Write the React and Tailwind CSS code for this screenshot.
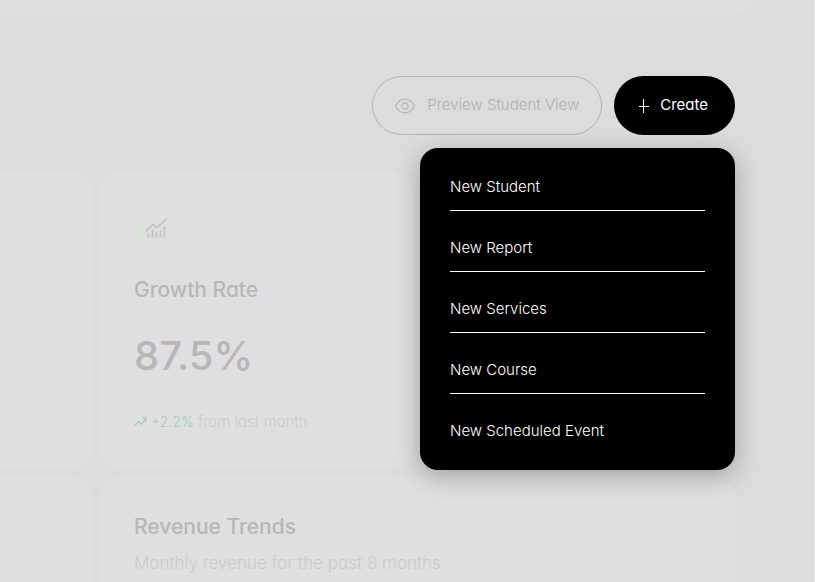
import React from 'react';

const menuItems = ['New Student', 'New Report', 'New Services', 'New Course', 'New Scheduled Event'];

const EyeIcon = () => (
  <svg width="20" height="16" viewBox="0 0 20 16" fill="none" stroke="currentColor" strokeWidth="1.1" aria-hidden="true">
    <path d="M1 7.2C3.4 3.2 6.3 1 10 1s6.600 2.200 9 6.200c.3.500.3 1.100 0 1.600-2.400 4-5.300 6.200-9 6.200s-6.600-2.200-9-6.200c-.3-.5-.3-1.100 0-1.600Z" />
    <circle cx="10" cy="8" r="3.1" />
  </svg>
);

const PlusIcon = () => (
  <svg width="12" height="16" viewBox="0 0 12 16" fill="none" stroke="currentColor" strokeWidth="1" aria-hidden="true">
    <path d="M5.500 1v14M1 8.500h10" />
  </svg>
);

const ChartIcon = () => (
  <svg width="24" height="24" viewBox="0 0 24 24" fill="none" strokeLinecap="round" aria-hidden="true">
    <path d="M2 15.500 8.500 8.700c.4-.4.800-.4 1.200 0l2.600 2.600c.4.400.8.400 1.200 0L22.500 3" stroke="#b9bcb9" strokeWidth="1.200" />
    <path d="M4.500 18.500v2.500M8.500 14.500v6.500M12.500 17v4M16.500 15v6M20.500 11v10" stroke="#bfc2bf" strokeWidth="1.700" />
  </svg>
);

const TrendIcon = () => (
  <svg width="13" height="10" viewBox="0 0 13 10" fill="none" stroke="currentColor" strokeWidth="1.200" strokeLinecap="round" strokeLinejoin="round" aria-hidden="true">
    <path d="M1 8.500 4.500 4.700l3 2.300L12 1.500M8.500 1H12v3.500" />
  </svg>
);

const Header = () => (
  <div className="flex justify-end gap-3 pr-[79px] pt-[61px]">
    <button
      type="button"
      className="flex items-center gap-3 rounded-full border border-[#b3b3b3] px-[22px] h-[59px] text-[15px] font-light text-[#b1b1b1]"
    >
      <EyeIcon />
      Preview Student View
    </button>

    <div className="relative">
      <button
        type="button"
        aria-expanded="true"
        className="flex items-center gap-2.5 rounded-full bg-black pl-6 pr-[27px] h-[59px] text-[15px] text-white"
      >
        <PlusIcon />
        Create
      </button>

      <ul className="absolute right-0 top-[72px] z-10 w-[315px] rounded-[18px] bg-black px-[30px] pt-0.5 pb-[27px] shadow-[0_6px_26px_rgba(0,0,0,0.28)]">
        {menuItems.map((item) => (
          <li key={item} className="border-b border-white pt-[25px] pb-[11px] last:border-b-0 last:pb-0">
            <button type="button" className="block w-full text-left text-[15px] leading-6 font-light text-white">
              {item}
            </button>
          </li>
        ))}
      </ul>
    </div>
  </div>
);

const GrowthCard = () => (
  <section className="rounded-3xl bg-[#dfdfdf] px-[35px] pt-9 pb-9">
    <div className="flex size-11 items-center justify-center rounded-full bg-[#dde0dc]">
      <ChartIcon />
    </div>
    <h2 className="mt-6 text-[21px] leading-8 font-medium text-[#b7b7b7]">Growth Rate</h2>
    <p className="mt-5 text-[40px] leading-[60px] font-medium text-[#b7b7b7]">87.5%</p>
    <p className="mt-6 flex items-center gap-1 text-[15px] leading-6 font-light whitespace-nowrap text-[#cbccce]">
      <span className="flex items-center gap-1 text-sm leading-6 font-light text-[#a6ccb7]">
        <TrendIcon />
        +2.2%
      </span>
      from last month
    </p>
  </section>
);

export default function App() {
  return (
    <div className="flex min-h-screen flex-col border-r border-[#ededed] bg-[#dcdcdc] font-['Inter',sans-serif] [font-feature-settings:'cv11']">
      <div className="pr-[62px]">
        <div className="h-[15px] rounded-br-3xl bg-[#dfdfdf]" />
      </div>

      <Header />

      {/* Stats */}
      <main className="grid grow grid-cols-[93px_1fr_1fr] grid-rows-[auto_1fr] gap-1.5 pr-[79px] pt-[35px]">
        <div className="rounded-r-3xl bg-[#dfdfdf]" />
        <GrowthCard />
        <div className="rounded-3xl bg-[#dfdfdf]" />

        <div className="rounded-tr-3xl bg-[#dfdfdf]" />
        <section className="col-span-2 rounded-t-3xl bg-[#dfdfdf] px-[35px] pt-[35px]">
          <h2 className="text-[21px] leading-8 font-medium text-[#b7b7b7]">Revenue Trends</h2>
          <p className="mt-2 text-[17px] leading-6 font-light text-[#cacbcd]">Monthly revenue for the past 8 months</p>
        </section>
      </main>
    </div>
  );
}
